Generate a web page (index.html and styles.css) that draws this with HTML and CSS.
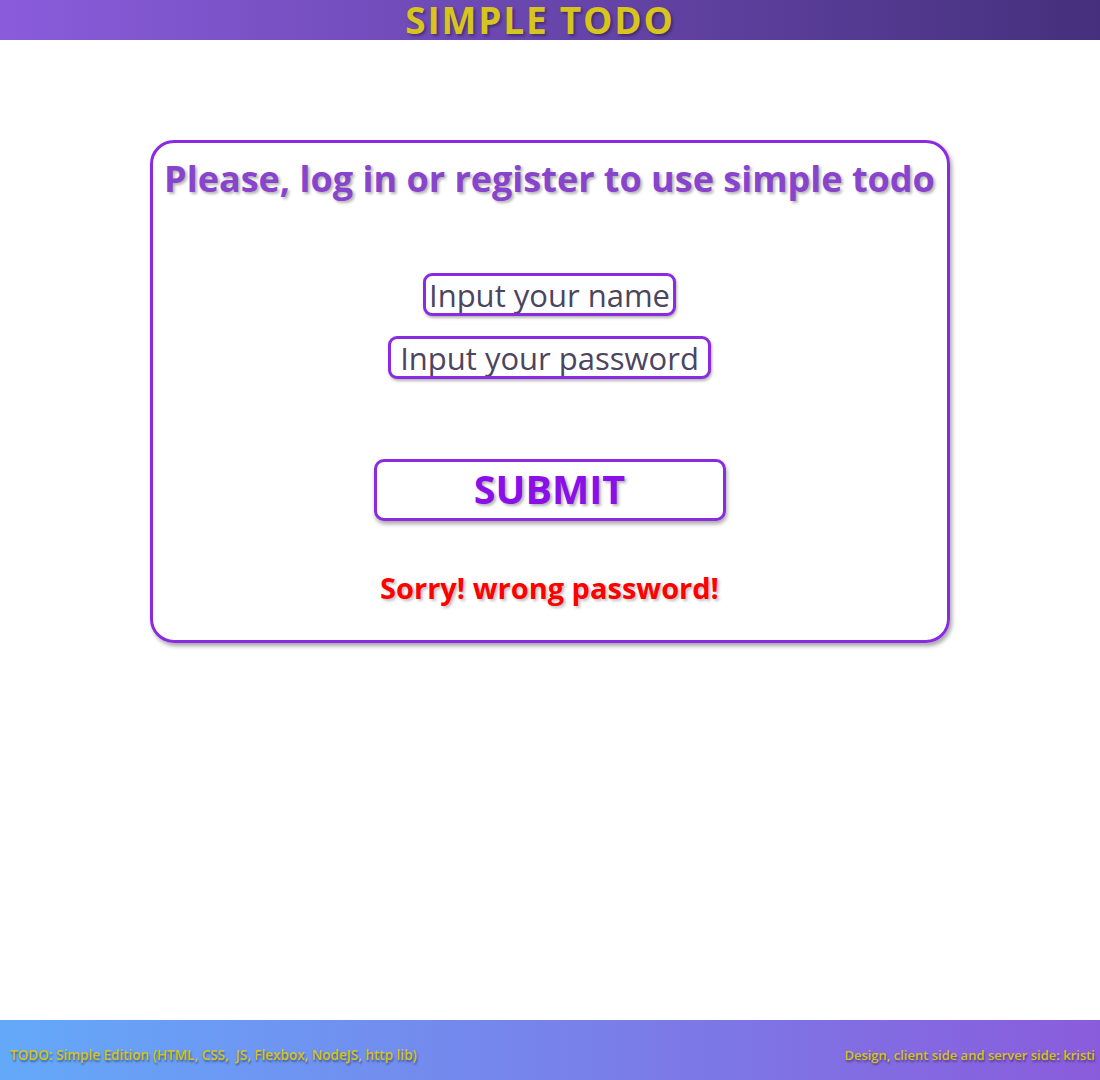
FILE: index.html
```html
<!DOCTYPE html>
<html lang="en">
<head>
<meta charset="utf-8">
<title>Simple Todo</title>
<link rel="stylesheet" href="styles.css">
</head>
<body>
<header class="top">
  <h1 class="brand">SIMPLE TODO</h1>
</header>
<main class="main">
  <section class="card">
    <h2 class="card-title">Please, log in or register to use simple todo</h2>
    <form class="form">
      <input class="field field-name" type="text" placeholder="Input your name">
      <input class="field field-pass" type="password" placeholder="Input your password">
      <button class="submit" type="button">SUBMIT</button>
    </form>
    <p class="error">Sorry! wrong password!</p>
  </section>
</main>
<footer class="bottom">
  <span class="foot-text foot-left">TODO: Simple Edition (HTML, CSS,&nbsp; JS, Flexbox, NodeJS, http lib)</span>
  <span class="foot-text">Design, client side and server side: kristi</span>
</footer>
</body>
</html>
```
FILE: styles.css
```css
* { box-sizing: border-box; }
html, body { height: 100%; }
body {
  margin: 0;
  font-family: "Open Sans", "Noto Sans", sans-serif;
  display: flex;
  flex-direction: column;
  min-height: 100vh;
  background: #fff;
}
.top {
  height: 40px;
  background: linear-gradient(to right, #8a5cdc, #45307c);
  display: flex;
  justify-content: center;
  align-items: center;
  padding-right: 20px;
  overflow: visible;
}
.brand {
  margin: 0;
  font-size: 37px;
  font-weight: 700;
  color: #d7c41f;
  line-height: 40px;
  height: 40px;
  letter-spacing: 1.8px;
  text-shadow: 2px 2px 3px rgba(0,0,0,0.35);
}
.main {
  flex: 1;
  display: flex;
  justify-content: center;
  align-items: flex-start;
  padding-top: 100px;
}
.card {
  width: 800px;
  height: 503px;
  margin-right: 1px;
  border: 3px solid #8a2be2;
  border-radius: 24px;
  box-shadow: 2px 3px 4px rgba(0,0,0,0.35);
  display: flex;
  flex-direction: column;
  align-items: center;
}
.card-title {
  margin: 12px 0 0;
  font-size: 36px;
  font-weight: 700;
  color: #8844cc;
  line-height: 48px;
  letter-spacing: 0;
  text-shadow: 2px 2px 3px rgba(0,0,0,0.3);
}
.form {
  margin-top: 70px;
  display: flex;
  flex-direction: column;
  align-items: center;
}
.field {
  height: 43px;
  border: 3px solid #8a2be2;
  border-radius: 9px;
  box-shadow: 1px 2px 3px rgba(0,0,0,0.3);
  font-family: "Open Sans", "Noto Sans", sans-serif;
  font-size: 31px;
  font-weight: 400;
  color: #4b4560;
  padding: 0;
  text-align: center;
  outline: none;
  background: #fff;
}
.field::placeholder { color: #4b4560; opacity: 1; }
.field-name { width: 253px; }
.field-pass { width: 323px; margin-top: 20px; }
.submit {
  margin-top: 80px;
  width: 352px;
  height: 62px;
  border: 3px solid #8a2be2;
  border-radius: 10px;
  background: #fff;
  box-shadow: 1px 3px 4px rgba(0,0,0,0.35);
  font-family: "Open Sans", "Noto Sans", sans-serif;
  font-size: 39.5px;
  font-weight: 700;
  color: #8a0fe8;
  text-shadow: 2px 2px 3px rgba(0,0,0,0.3);
  padding: 0;
  line-height: 1;
}
.error {
  margin: 48px 0 0;
  font-size: 29px;
  font-weight: 700;
  color: #ff0000;
  line-height: 38px;
  text-shadow: 2px 2px 3px rgba(0,0,0,0.25);
}
.bottom {
  height: 60px;
  background: linear-gradient(to right, #64a9f9, #8a5cdc);
  display: flex;
  justify-content: space-between;
  align-items: flex-end;
  padding: 0 5px 16px 10px;
}
.foot-text {
  font-size: 13px;
  font-weight: 600;
  color: #d4c21c;
  text-shadow: 1px 2px 2px rgba(0,0,0,0.4);
  line-height: 18px;
}
.foot-left { font-size: 13.5px; }
```
